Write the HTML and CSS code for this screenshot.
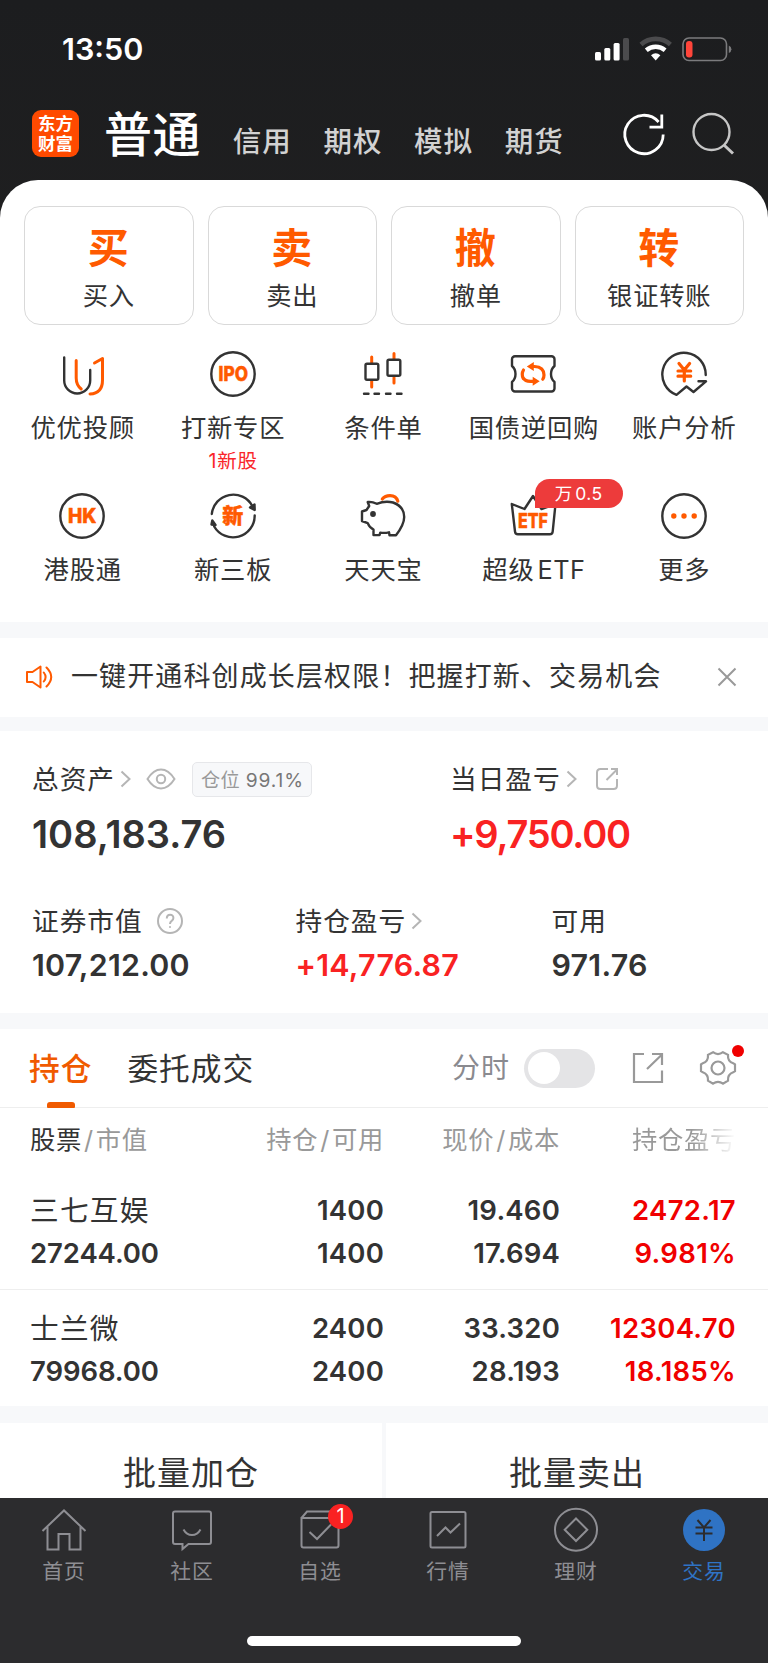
FILE: index.html
```html
<!DOCTYPE html>
<html lang="zh-CN">
<head>
    <meta charset="UTF-8">
    <meta name="viewport" content="width=device-width, initial-scale=1.0">
    <title>东方财富 - 交易</title>
    <link rel="stylesheet" href="styles.css">
</head>
<body>
    <div class="status-bar">
        <span class="time">13:50</span>
        <svg class="status-icons" width="138" height="26" viewBox="0 0 138 26">
            <rect x="1" y="16" width="6" height="8.5" rx="1.5" fill="#fff"/>
            <rect x="10.3" y="12" width="6" height="12.5" rx="1.5" fill="#fff"/>
            <rect x="19.6" y="7" width="6" height="17.5" rx="1.5" fill="#fff"/>
            <rect x="29" y="2" width="6" height="22.5" rx="1.5" fill="#4b4b4d"/>
            <path d="M47 8.5a22 22 0 0 1 29.4 0" fill="none" stroke="#4b4b4d" stroke-width="4.6"/>
            <path d="M52.3 14.2a14.5 14.5 0 0 1 18.8 0" fill="none" stroke="#fff" stroke-width="4.4"/>
            <path d="M57 19.2q4.700-4 9.400 0l-4.700 5.200z" fill="#fff"/>
            <rect x="89" y="2" width="43.5" height="22.5" rx="6" fill="none" stroke="#7b7b7d" stroke-width="1.6"/>
            <rect x="92" y="5" width="6.5" height="16.5" rx="3" fill="#ff453a"/>
            <path d="M134.8 9.500q2.600 1.200 2.600 3.800t-2.600 3.800z" fill="#7b7b7d"/>
        </svg>
    </div>

    <header class="header">
        <div class="logo"><span>东方</span><span>财富</span></div>
        <nav class="modes">
            <a class="mode active">普通</a>
            <a class="mode">信用</a>
            <a class="mode">期权</a>
            <a class="mode">模拟</a>
            <a class="mode">期货</a>
        </nav>
        <svg class="refresh" width="48" height="48" viewBox="0 0 48 48" fill="none" stroke="#fff" stroke-width="2.8">
            <path d="M43.200 24.500a19.200 19.200 0 1 1-4.600-12.500M29.500 17.200h12.300V4.500"/>
        </svg>
        <svg class="search" width="48" height="48" viewBox="0 0 48 48" fill="none" stroke="#c6c6c6" stroke-width="2.4">
            <circle cx="23.5" cy="22" r="18"/>
            <path d="M36 35l9 8.500" stroke-width="3"/>
        </svg>
    </header>

    <main class="panel">
        <section class="actions">
            <a class="action"><b>买</b><span>买入</span></a>
            <a class="action"><b>卖</b><span>卖出</span></a>
            <a class="action"><b>撤</b><span>撤单</span></a>
            <a class="action"><b>转</b><span>银证转账</span></a>
        </section>

        <section class="tools">
            <a class="tool">
                <svg class="icon" viewBox="0 0 48 48">
                    <path class="o" d="M18.200 10.500V28q0 7 5 11M36.500 13l8-4.500V30q0 13.500-12.500 14"/>
                    <path d="M6.200 7.500V30.500a13 13 0 0 0 26 0V20"/>
                </svg>
                <span>优优投顾</span>
            </a>
            <a class="tool">
                <svg class="icon" viewBox="0 0 48 48">
                    <circle cx="24" cy="24" r="21.7"/>
                    <text class="t" x="9.5" y="31.2" font-size="20" textLength="29.5" lengthAdjust="spacingAndGlyphs">IPO</text>
                </svg>
                <span>打新专区</span>
                <em>1新股</em>
            </a>
            <a class="tool">
                <svg class="icon" viewBox="0 0 48 48">
                    <path class="o" d="M12.700 7v6M12.700 31v6M35 3.500v5.500M35 27.500v5.500"/>
                    <rect x="6.5" y="13.8" width="12.8" height="16" rx="1.5"/>
                    <rect x="28.5" y="9.8" width="12.8" height="16" rx="1.5"/>
                    <path d="M5 43.700h4.500M15.500 43.700h4.500M27 43.700h4.500M38 43.700h4.500"/>
                </svg>
                <span>条件单</span>
            </a>
            <a class="tool">
                <svg class="icon" viewBox="0 0 48 48">
                    <path d="M6 6.300H42.500a3 3 0 0 1 3 3V16q-3.500 3-3.500 8t3.500 8v6.500a3 3 0 0 1-3 3H6a3 3 0 0 1-3-3V32q3.500-3 3.500-8T3 16V9.300a3 3 0 0 1 3-3z"/>
                    <path class="o w" d="M14.300 28.500q-2.200-4.500.2-8.500M23.500 16.500h2q9.500.5 9.500 8.500 0 2.500-1.200 4.200M14.300 28q1.700 3.300 7.200 3.300h3"/>
                    <path class="f" d="M24.800 12v9l-7-4.500zM23.700 26.800v9l7-4.500z"/>
                </svg>
                <span>国债逆回购</span>
            </a>
            <a class="tool">
                <svg class="icon" viewBox="0 0 48 48">
                    <path d="M45.700 25A21.700 21.700 0 1 0 16.500 44.800L26.500 36.500 33.500 42l12.500-10.700H38.500"/>
                    <path class="o w" d="M19 13.500L24.300 20l5.300-6.500M18 21h12.700M18 26.200h12.700M24.300 20.500V31"/>
                </svg>
                <span>账户分析</span>
            </a>
            <a class="tool">
                <svg class="icon" viewBox="0 0 48 48">
                    <circle cx="24" cy="24" r="21.7"/>
                    <text class="t" x="10" y="31.3" font-size="20" textLength="28.5" lengthAdjust="spacingAndGlyphs">HK</text>
                </svg>
                <span>港股通</span>
            </a>
            <a class="tool">
                <svg class="icon" viewBox="0 0 48 48">
                    <path d="M2.800 22a21.600 21.600 0 0 1 40.500-8M45.700 23.500a21.700 21.700 0 0 1-40.500 11"/>
                    <path d="M41 15.500l4.500-3 .2 5.500zM6.500 33l-4-.5.8-4z" fill="#333"/>
                    <text class="t" x="13.3" y="31.2" font-size="21">新</text>
                </svg>
                <span>新三板</span>
            </a>
            <a class="tool">
                <svg class="icon" viewBox="0 0 48 48">
                    <path class="o w" d="M23.300 7Q26 3.600 31 3.600q6.300 0 7.800 5.600"/>
                    <path d="M8.700 10q4.500-.5 9 1.800Q26 8.500 34 10.500q11.200 4 11.200 14.500 0 7.500-8.200 18.300h-6.500l-.5-3q-4.500 1-8.700.3l-.8 2.500H14.500v-5.500q-4-2-5.800-6.500L3 29V19.500l4.500-1.500 2.700-4z"/>
                    <circle cx="14" cy="22" r="1.7" fill="#333"/>
                </svg>
                <span>天天宝</span>
            </a>
            <a class="tool">
                <svg class="icon" viewBox="0 0 48 48">
                    <path d="M2.800 12l12.700 5L24 4l8.500 13 14-5-2.800 27.500a3 3 0 0 1-3 2.800H9a3 3 0 0 1-3-2.800z"/>
                    <text class="t" x="9" y="35.5" font-size="20.5" textLength="30" lengthAdjust="spacingAndGlyphs">ETF</text>
                </svg>
                <i class="badge">万<u>0.5</u></i>
                <span>超级<u>ETF</u></span>
            </a>
            <a class="tool">
                <svg class="icon" viewBox="0 0 48 48">
                    <circle cx="24" cy="24" r="21.7"/>
                    <g class="f"><circle cx="13.8" cy="24" r="2.7"/><circle cx="24" cy="24" r="2.7"/><circle cx="34.2" cy="24" r="2.7"/></g>
                </svg>
                <span>更多</span>
            </a>
        </section>
    </main>

    <section class="notice">
        <svg width="28" height="26" viewBox="0 0 28 26" fill="none" stroke="#ff5a00" stroke-width="2" stroke-linejoin="round" stroke-linecap="round">
            <path d="M2 8h5.500l8-5.500v21L7.500 18H2zM18.800 8.500q3.600 4.500 0 9M21.500 3.500q9.500 9.500 0 19"/>
        </svg>
        <p>一键开通科创成长层权限！把握打新、交易机会</p>
        <svg width="20" height="20" viewBox="0 0 20 20" stroke="#999" stroke-width="2"><path d="M1.500 1.500l17 17M18.500 1.500l-17 17"/></svg>
    </section>

    <section class="assets">
        <div class="assets-main">
            <div class="asset">
                <div class="name">总资产
                    <svg class="chevron" viewBox="0 0 11 18"><path d="M1.500 1.500l8 7.500-8 7.500"/></svg>
                    <svg class="eye" width="30" height="22" viewBox="0 0 30 22"><path d="M1.500 11Q7.500 1.500 15 1.500T28.500 11Q22.500 20.500 15 20.500T1.500 11z"/><circle cx="15" cy="11" r="4.2"/></svg>
                    <span class="ratio">仓位 <b>99.1%</b></span>
                </div>
                <div class="big">108,183.76</div>
            </div>
            <div class="asset">
                <div class="name">当日盈亏
                    <svg class="chevron" viewBox="0 0 11 18"><path d="M1.500 1.500l8 7.500-8 7.500"/></svg>
                    <svg class="share" width="24" height="24" viewBox="0 0 24 24"><path d="M13 2H5.500Q2 2 2 5.500v13Q2 22 5.500 22h13q3.500 0 3.500-3.500V12M11.500 13L22 2.500M16 2h6v6"/></svg>
                </div>
                <div class="big up">+9,750.00</div>
            </div>
        </div>
        <div class="assets-sub">
            <div class="asset">
                <div class="name">证券市值
                    <svg class="help" width="26" height="26" viewBox="0 0 26 26"><circle cx="13" cy="13" r="12"/><path d="M9.800 10.500q0-3.700 3.300-3.700t3.300 3.200q0 1.700-1.700 2.900-1.700 1.100-1.700 3"/><path d="M13 18.200v1.600"/></svg>
                </div>
                <div class="num">107,212.00</div>
            </div>
            <div class="asset">
                <div class="name">持仓盈亏
                    <svg class="chevron" viewBox="0 0 11 18"><path d="M1.500 1.500l8 7.500-8 7.500"/></svg>
                </div>
                <div class="num up">+14,776.87</div>
            </div>
            <div class="asset">
                <div class="name">可用</div>
                <div class="num">971.76</div>
            </div>
        </div>
    </section>

    <section class="positions">
        <div class="tabs">
            <a class="tab active">持仓</a>
            <a class="tab">委托成交</a>
            <span class="switch-label">分时</span>
            <span class="switch"></span>
            <svg class="export" width="32" height="32" viewBox="0 0 32 32"><path d="M12 2H2v28h28V18.500M15 17L30 2.500M20 2h10v11"/></svg>
            <span class="gear">
                <svg width="38" height="38" viewBox="0 0 38 38"><path d="M14 3.200q5 3.800 10 0l5 2.700q-.5 6.600 5.200 8.400l1.800 1v6.900l-1.800 1q-5.700 2-5.200 8.400l-5 3q-5-3.600-10 0l-5-3q.5-6.400-5.200-8.400l-1.800-1v-6.900l1.800-1q5.700-1.800 5.200-8.400z"/><circle cx="19" cy="19" r="6.5"/></svg>
            </span>
        </div>
        <div class="row head">
            <span><b>股票</b><i>/</i>市值</span><span>持仓<i>/</i>可用</span><span>现价<i>/</i>成本</span><span class="fade">持仓盈亏</span>
        </div>
        <div class="row">
            <span class="stock">三七互娱</span><span>1400</span><span>19.460</span><span class="up">2472.17</span>
            <span>27244.00</span><span>1400</span><span>17.694</span><span class="up">9.981%</span>
        </div>
        <div class="row">
            <span class="stock">士兰微</span><span>2400</span><span>33.320</span><span class="up">12304.70</span>
            <span>79968.00</span><span>2400</span><span>28.193</span><span class="up">18.185%</span>
        </div>
    </section>

    <section class="batch">
        <a>批量加仓</a>
        <a>批量卖出</a>
    </section>

    <footer class="tabbar">
        <nav>
            <a>
                <svg viewBox="0 0 48 48"><path d="M2.500 25L24 4.500 45.500 25M7.500 21v22.500h11V28h11v15.500h11V21"/></svg>
                <span>首页</span>
            </a>
            <a>
                <svg viewBox="0 0 48 48"><path d="M7 5.500h34a2 2 0 0 1 2 2V36a2 2 0 0 1-2 2H20.500l-6 5V38H7a2 2 0 0 1-2-2V7.500a2 2 0 0 1 2-2zM15.500 23.500q3 5.500 8.500 5.500t8.500-5.500"/></svg>
                <span>社区</span>
            </a>
            <a>
                <svg viewBox="0 0 48 48"><path d="M5.500 12h37v27.500a2 2 0 0 1-2 2h-33a2 2 0 0 1-2-2zM5.500 12L11 5.500h26l5.500 6.500M13.500 26l7.500 7 14-14.500"/></svg>
                <i class="dot">1</i>
                <span>自选</span>
            </a>
            <a>
                <svg viewBox="0 0 48 48"><rect x="6.5" y="6" width="35" height="35.5" rx="1.5"/><path d="M13 30l8.500-8.500 5 5L36 17.500"/></svg>
                <span>行情</span>
            </a>
            <a>
                <svg viewBox="0 0 48 48"><circle cx="24" cy="23.7" r="21"/><path d="M24 12.500L35.300 23.700 24 35 12.700 23.700z"/></svg>
                <span>理财</span>
            </a>
            <a class="active">
                <svg viewBox="0 0 48 48"><circle cx="24" cy="24" r="21" fill="#2f73c4" stroke="none"/><path stroke="#2c2c2e" d="M17.500 14l6.500 7.500L30.500 14M15.500 21.500h17M15.500 27.500h17M24 21.500v13.500"/></svg>
                <span>交易</span>
            </a>
        </nav>
        <div class="home-indicator"></div>
    </footer>
</body>
</html>
```

FILE: styles.css
```css
* {
    box-sizing: border-box;
}

body {
    margin: 0;
    width: 768px;
    height: 1663px;
    overflow: hidden;
    background-color: #f7f8fa;
    background-image: linear-gradient(#1c1d1f, #1f1f20);
    background-size: 100% 240px;
    background-repeat: no-repeat;
    color: #333;
    font-family: Inter, "Noto Sans CJK SC", sans-serif;
}

i, em, u {
    font-style: normal;
    text-decoration: none;
}

svg {
    display: block;
    flex: none;
}

.up {
    color: #f92222;
}

/* status bar */
.status-bar {
    display: flex;
    justify-content: space-between;
    align-items: center;
    height: 98px;
    padding: 0 36px 0 62px;
    color: #fff;
}

.time {
    font-size: 30.5px;
    font-weight: 600;
    line-height: 36px;
    margin-bottom: 1px;
}

/* header */
.header {
    display: flex;
    align-items: center;
    height: 81.5px;
    padding: 0 32px 10px 32px;
}

.logo {
    display: flex;
    flex-direction: column;
    justify-content: center;
    width: 47px;
    height: 47px;
    border-radius: 9px;
    background-color: #ff4a00;
    color: #fff;
    font-size: 17.5px;
    font-weight: 700;
    line-height: 19.5px;
    text-align: center;
}

.modes {
    display: flex;
    align-items: baseline;
    flex: 1;
    margin: 9px 0 0 25px;
    line-height: 60px;
}

.mode {
    margin-right: 31.7px;
    color: #d2d2d2;
    font-size: 28.5px;
    font-weight: 500;
    letter-spacing: 1px;
}

.mode.active {
    color: #fff;
    font-size: 48px;
    letter-spacing: 0.5px;
}

.search {
    margin-left: 20px;
}

/* top panel */
.panel {
    height: 442.5px;
    padding-top: 26.5px;
    border-radius: 38px 38px 0 0;
    background-color: #fff;
}

.actions {
    display: grid;
    grid-template-columns: repeat(4, 1fr);
    gap: 14px;
    padding: 0 24px;
}

.action {
    display: flex;
    flex-direction: column;
    align-items: center;
    height: 119px;
    padding-top: 16px;
    border: 1px solid #d9d9d9;
    border-radius: 16px;
}

.action b {
    margin-right: 1px;
    color: #ff5a00;
    font-size: 41px;
    line-height: 50px;
}

.action span {
    margin-top: 8px;
    font-size: 25.3px;
    letter-spacing: 0.8px;
    line-height: 30px;
}

.tools {
    display: grid;
    grid-template-columns: repeat(5, 1fr);
    grid-template-rows: 141.6px 120px;
    padding: 25px 8.5px 0 7.5px;
}

.tool {
    position: relative;
    display: flex;
    flex-direction: column;
    align-items: center;
}

.tool span {
    margin-top: 15px;
    font-size: 25.3px;
    letter-spacing: 0.8px;
    line-height: 30px;
    white-space: nowrap;
}

.tool span u {
    margin-left: 3px;
    letter-spacing: 0.5px;
}

.tool em {
    margin-top: 8px;
    color: #f9262a;
    font-size: 19.5px;
    letter-spacing: 0.8px;
    line-height: 20px;
}

.icon {
    width: 48px;
    height: 48px;
    margin-left: -1px;
    fill: none;
    stroke: #333;
    stroke-width: 2.4;
    stroke-linecap: round;
    stroke-linejoin: round;
}

.icon .o {
    stroke: #ff5a00;
    stroke-width: 3;
}

.icon .w {
    stroke-width: 3.2;
}

.icon .f {
    fill: #ff5a00;
    stroke: none;
}

.icon .t {
    fill: #ff5a00;
    stroke: #ff5a00;
    stroke-width: 0.5;
    font-weight: 800;
}

.badge {
    position: absolute;
    top: -13px;
    left: 76px;
    width: 88px;
    height: 29px;
    border-radius: 15px 15px 15px 0;
    background-color: #ed3b3b;
    color: #fff;
    font-size: 17.5px;
    line-height: 30px;
    text-align: center;
}

.badge u {
    margin-left: 3px;
    letter-spacing: 0.5px;
}

/* notice */
.notice {
    display: flex;
    align-items: center;
    height: 79px;
    margin-top: 16px;
    padding: 0 31px 1px 25px;
    background-color: #fff;
}

.notice p {
    flex: 1;
    margin: 0 0 0 18px;
    font-size: 27px;
    letter-spacing: 1.12px;
    line-height: 40px;
    white-space: nowrap;
}

/* assets */
.assets {
    height: 282px;
    margin-top: 14px;
    padding: 30px 32px 0;
    background-color: #fff;
}

.assets-main {
    display: grid;
    grid-template-columns: 418px 1fr;
    height: 142px;
}

.assets-sub {
    display: grid;
    grid-template-columns: 263.5px 256px 1fr;
}

.name {
    display: flex;
    align-items: center;
    height: 36px;
    font-size: 26.7px;
    letter-spacing: 1px;
    line-height: 36px;
}

.name svg {
    fill: none;
    stroke: #b5b5b5;
    stroke-width: 2;
}

.chevron {
    width: 11px;
    height: 18px;
    margin-left: 5px;
}

.eye {
    margin-left: 15px;
}

.share {
    margin-left: 18px;
}

.help {
    margin-left: 14px;
}

.ratio {
    height: 35px;
    margin-left: 16px;
    padding: 0 7px 0 8px;
    border: 1px solid #e6e7ea;
    border-radius: 5px;
    background-color: #f7f8fa;
    color: #999;
    font-size: 19.2px;
    letter-spacing: 0.3px;
    line-height: 35px;
}

.ratio b {
    color: #777;
    font-weight: 400;
    letter-spacing: 0.9px;
}

.big {
    margin-top: 16.5px;
    font-size: 38px;
    font-weight: 600;
    line-height: 40px;
}

.big.up {
    letter-spacing: -1.2px;
}

.num {
    margin-top: 10px;
    font-size: 30.4px;
    font-weight: 600;
    letter-spacing: 0.25px;
    line-height: 32px;
}

/* positions */
.positions {
    height: 377px;
    margin-top: 16px;
    background-color: #fff;
}

.positions .up {
    color: #f00000;
    letter-spacing: 0.3px;
}

.tabs {
    display: flex;
    align-items: center;
    height: 79px;
    padding: 0 31px 0 29px;
    border-bottom: 1px solid #eee;
}

.tab {
    position: relative;
    margin-right: 36px;
    font-size: 30.7px;
    letter-spacing: 1px;
    line-height: 79px;
}

.tab.active {
    margin-right: 35px;
    color: #f05a00;
    font-weight: 500;
}

.tab.active::after {
    content: "";
    position: absolute;
    left: 17.5px;
    bottom: 0;
    width: 28px;
    height: 6px;
    border-radius: 3px 3px 1px 1px;
    background-color: #f05a00;
}

.switch-label {
    margin-left: auto;
    color: #8a8a8f;
    font-size: 28px;
    letter-spacing: 1px;
    line-height: 40px;
}

.switch {
    width: 71px;
    height: 39px;
    margin-left: 14px;
    padding: 3.5px;
    border-radius: 20px;
    background-color: #e4e4e6;
}

.switch::before {
    content: "";
    display: block;
    width: 32px;
    height: 32px;
    border-radius: 50%;
    background-color: #fff;
}

.export {
    margin-left: 37px;
}

.tabs svg {
    fill: none;
    stroke: #999;
    stroke-width: 2.2;
}

.gear {
    position: relative;
    margin-left: 35px;
}

.gear::after {
    content: "";
    position: absolute;
    top: -4px;
    right: -7px;
    width: 12px;
    height: 12px;
    border-radius: 50%;
    background-color: #f00000;
}

.row {
    display: grid;
    grid-template-columns: 180px 174px 176px 1fr;
    grid-auto-rows: 43px;
    align-content: center;
    height: 118px;
    padding: 4px 32px 0 30px;
    font-size: 27.5px;
    font-weight: 600;
    letter-spacing: 0.2px;
    line-height: 43px;
    text-align: right;
}

.row > span:nth-child(4n + 1) {
    letter-spacing: -0.1px;
    text-align: left;
}

.row + .row + .row {
    padding-top: 3px;
    border-top: 1px solid #eee;
}

.row > .stock:first-child {
    font-size: 28.7px;
    font-weight: 400;
    letter-spacing: 1.2px;
}

.row.head {
    height: 63px;
    padding-top: 0;
    color: #999;
    font-size: 25.3px;
    font-weight: 400;
    letter-spacing: 0.7px;
}

.row.head span {
    letter-spacing: 0.7px;
}

.head b {
    color: #333;
    font-weight: 400;
}

.head i {
    margin: 0 2px;
}

.fade {
    background-image: linear-gradient(90deg, #999 75%, #fff);
    background-clip: text;
    color: transparent;
}

/* batch buttons */
.batch {
    display: grid;
    grid-template-columns: 1fr 1fr;
    gap: 4px;
    height: 75.5px;
    margin-top: 16.5px;
    overflow: hidden;
}

.batch a {
    background-color: #fff;
    font-size: 33px;
    letter-spacing: 1px;
    line-height: 100px;
    text-align: center;
}

/* bottom tab bar */
.tabbar {
    height: 165px;
    background-color: #2c2c2e;
}

.tabbar nav {
    display: grid;
    grid-template-columns: repeat(6, 1fr);
    height: 138px;
    padding-top: 8px;
}

.tabbar a {
    position: relative;
    display: flex;
    flex-direction: column;
    align-items: center;
    color: #8e8e93;
    font-size: 20.8px;
    letter-spacing: 1px;
    line-height: 30px;
}

.tabbar span {
    margin-top: 3px;
}

.tabbar svg {
    width: 48px;
    height: 48px;
    fill: none;
    stroke: #8e8e93;
    stroke-width: 2;
}

.tabbar .active {
    color: #2f73c4;
}

.dot {
    position: absolute;
    top: -2px;
    left: 72px;
    width: 25px;
    height: 25px;
    border-radius: 50%;
    background-color: #f92222;
    color: #fff;
    font-size: 20px;
    letter-spacing: 0;
    line-height: 25px;
    text-align: center;
}

.home-indicator {
    width: 274px;
    height: 10px;
    margin: 0 auto;
    border-radius: 5px;
    background-color: #fff;
}
```
